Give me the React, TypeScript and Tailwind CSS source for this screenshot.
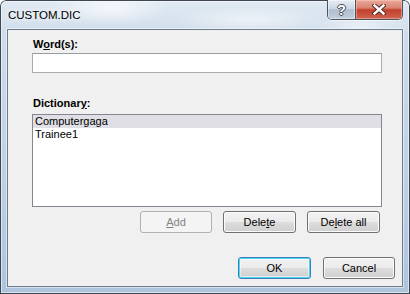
const BTN =
  'flex h-[22px] items-center justify-center rounded-[3px] border border-[#707070] bg-[linear-gradient(to_bottom,#f2f2f2_0%,#ebebeb_48%,#dddddd_52%,#cfcfcf_100%)] shadow-[inset_0_0_0_1px_#fcfcfc] text-black'

function TitleBar() {
  return (
    <div className="flex h-[29px] shrink-0 items-start justify-between">
      <div className="pl-[8px] pt-[9px] text-[11.5px] text-black [text-shadow:0_0_6px_#fff,0_0_10px_#fff]">
        CUSTOM.DIC
      </div>
      <div className="mr-[7px] flex h-[20px] overflow-hidden rounded-b-[5px] border border-t-0 border-[#4a5460] shadow-[0_1px_0_rgba(255,255,255,0.6)]">
        <div className="flex w-[28px] items-center justify-center border-r border-[#4a5460] bg-[linear-gradient(to_bottom,#e6ecf2_0%,#ccd7e3_45%,#aebdcd_52%,#c3cfdc_100%)] shadow-[inset_0_0_0_1px_rgba(255,255,255,0.45)]">
          <span className="pt-[1px] text-[14px] font-bold leading-[14px] text-white [text-shadow:1px_0_#3f4852,-1px_0_#3f4852,0_1px_#3f4852,0_-1px_#3f4852]">
            ?
          </span>
        </div>
        <div className="flex w-[46px] items-center justify-center bg-[linear-gradient(to_bottom,#eaa99a_0%,#d98370_42%,#c2402b_52%,#cf6552_100%)] shadow-[inset_0_0_0_1px_rgba(255,210,200,0.45)]">
          <svg width="14" height="11" viewBox="0 0 14 11">
            <path d="M2.5 1.5 L11.5 9.5 M11.5 1.5 L2.5 9.5" stroke="#5a2a22" strokeWidth="4.4" strokeLinecap="square" />
            <path d="M2.5 1.5 L11.5 9.5 M11.5 1.5 L2.5 9.5" stroke="#ffffff" strokeWidth="2.4" strokeLinecap="square" />
          </svg>
        </div>
      </div>
    </div>
  )
}

export default function App() {
  return (
    <div className="flex h-[294px] w-[410px] flex-col overflow-hidden rounded-t-[6px] bg-[radial-gradient(ellipse_60px_18px_at_110px_8px,rgba(255,255,255,0.7),transparent),radial-gradient(ellipse_80px_14px_at_250px_20px,rgba(255,255,255,0.55),transparent),radial-gradient(ellipse_50px_12px_at_360px_26px,rgba(255,255,255,0.5),transparent),linear-gradient(to_bottom,#e1eaf3_0%,#cedcea_12%,#bed0e4_60%,#adc4dc_100%)] font-['Liberation_Sans',Arial,sans-serif] text-[11px] leading-[13px] shadow-[inset_0_0_0_1px_#3e4751,inset_0_0_0_2px_rgba(255,255,255,0.55)]">
      <TitleBar />
      <div className="mx-[7px] mb-[7px] flex flex-1 flex-col border border-[#6d7b8b] bg-[#f0f0f0] shadow-[0_0_0_1px_rgba(255,255,255,0.5)]">
        <div className="flex flex-col pl-[24px] pr-[20px] pt-[8px]">
          <div className="pl-[1px] font-bold">
            W<span className="underline underline-offset-[1px]">o</span>rd(s):
          </div>
          <div className="mt-[2px] h-[20px] border border-[#a9abb0] border-t-[#9a9ca1] bg-white" />
          <div className="mt-[24px] pl-[1px] font-bold">
            Dictionar<span className="underline underline-offset-[1px]">y</span>:
          </div>
          <div className="mt-[4px] flex h-[93px] flex-col border border-[#828790] bg-white">
            <div className="h-[13px] bg-[#dfdfe5] pl-[2px] text-black">Computergaga</div>
            <div className="h-[13px] pl-[2px] text-black">Trainee1</div>
          </div>
          <div className="mr-[2px] mt-[4px] flex justify-end gap-[11px]">
            <div className="flex h-[22px] w-[72px] items-center justify-center rounded-[3px] border border-[#adb2b5] bg-[#f4f4f4] text-[#838383]">
              <span className="underline underline-offset-[1px]">A</span>dd
            </div>
            <div className={`${BTN} w-[73px]`}>
              Dele<span className="underline underline-offset-[1px]">t</span>e
            </div>
            <div className={`${BTN} w-[73px]`}>
              De<span className="underline underline-offset-[1px]">l</span>ete all
            </div>
          </div>
        </div>
        <div className="mr-[7px] mt-[24px] flex justify-end gap-[12px]">
          <div className="flex h-[22px] w-[73px] items-center justify-center rounded-[3px] border border-[#3c7fb1] bg-[linear-gradient(to_bottom,#f2f2f2_0%,#ebebeb_48%,#dddddd_52%,#cfcfcf_100%)] shadow-[inset_0_0_0_1px_#48d8fb,inset_0_0_0_2px_rgba(255,255,255,0.5)] text-black">
            OK
          </div>
          <div className={`${BTN} w-[72px]`}>Cancel</div>
        </div>
      </div>
    </div>
  )
}
